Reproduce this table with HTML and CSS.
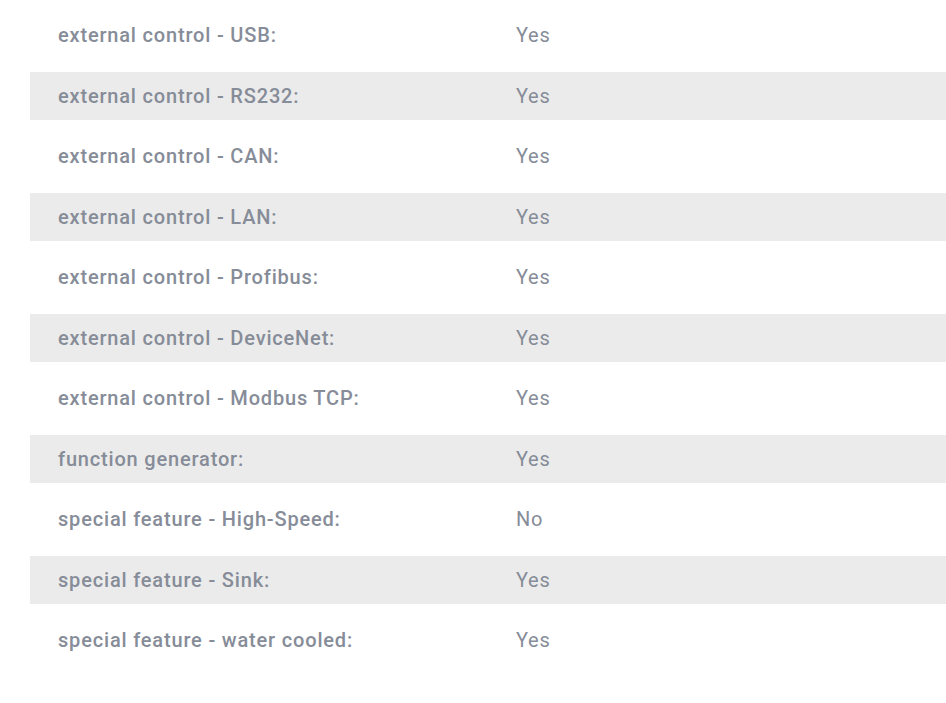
FILE: index.html
```html
<!DOCTYPE html>
<html>
<head>
<meta charset="utf-8">
<link rel="stylesheet" href="styles.css">
</head>
<body>
<div class="specs">
  <div class="row"><div class="label">external control - USB:</div><div class="value">Yes</div></div>
  <div class="row alt"><div class="label">external control - RS232:</div><div class="value">Yes</div></div>
  <div class="row"><div class="label">external control - CAN:</div><div class="value">Yes</div></div>
  <div class="row alt"><div class="label">external control - LAN:</div><div class="value">Yes</div></div>
  <div class="row"><div class="label">external control - Profibus:</div><div class="value">Yes</div></div>
  <div class="row alt"><div class="label">external control - DeviceNet:</div><div class="value">Yes</div></div>
  <div class="row"><div class="label">external control - Modbus TCP:</div><div class="value">Yes</div></div>
  <div class="row alt"><div class="label">function generator:</div><div class="value">Yes</div></div>
  <div class="row"><div class="label">special feature - High-Speed:</div><div class="value">No</div></div>
  <div class="row alt"><div class="label">special feature - Sink:</div><div class="value">Yes</div></div>
  <div class="row"><div class="label">special feature - water cooled:</div><div class="value">Yes</div></div>
</div>
</body>
</html>
```

FILE: styles.css
```css
html, body {
  margin: 0;
  padding: 0;
  background: #ffffff;
}
body {
  font-family: Roboto, "Liberation Sans", sans-serif;
  color: #868c98;
}
.specs {
  display: flex;
  flex-direction: column;
  gap: 12.5px;
  padding: 11px 0 0 30px;
}
.row {
  display: flex;
  align-items: center;
  height: 48px;
}
.row.alt {
  background: #ebebeb;
}
.label {
  width: 458px;
  padding-left: 28px;
  box-sizing: border-box;
  font-size: 20px;
  font-weight: 500;
  letter-spacing: 0.82px;
}
.value {
  padding-left: 28px;
  font-size: 20px;
  font-weight: 400;
  letter-spacing: 0.7px;
}
```
